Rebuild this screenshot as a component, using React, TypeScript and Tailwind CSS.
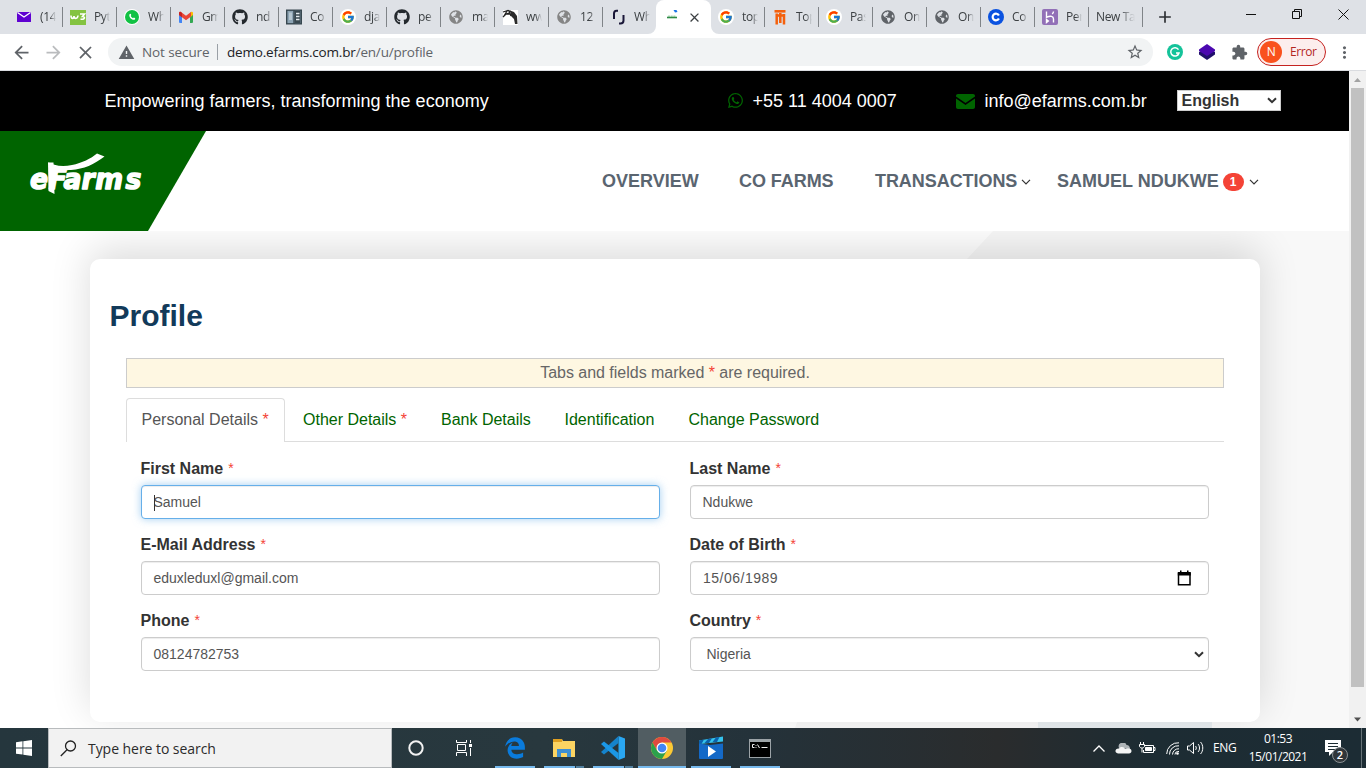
import React from "react";
import { FcGoogle } from "react-icons/fc";
import { FaGithub, FaWhatsapp, FaGlobeAmericas } from "react-icons/fa";
import { FaEdgeLegacy } from "react-icons/fa6";
import {
  MdArrowBack,
  MdArrowForward,
  MdClose,
  MdWarning,
  MdStarBorder,
  MdExtension,
  MdMoreVert,
  MdAdd,
} from "react-icons/md";

const Round = ({ children }: { children: React.ReactNode }) => (
  <span className="flex h-4 w-4 shrink-0 items-center justify-center rounded-full bg-white">{children}</span>
);
const Google = () => (
  <Round>
    <FcGoogle size={14} />
  </Round>
);
const Globe = ({ dark = false }: { dark?: boolean }) => (
  <FaGlobeAmericas size={14} className={dark ? "mx-px shrink-0 text-[#5f6368]" : "mx-px shrink-0 text-[#858585]"} />
);
const YahooMail = () => (
  <svg width="16" height="16" viewBox="0 0 16 16" className="shrink-0">
    <rect x="1" y="3" width="14" height="10" rx="0.5" fill="#5f01d1" />
    <path d="M1.500 3.500 8 8l6.500-4.500" stroke="#fff" strokeWidth="1.300" fill="none" />
  </svg>
);
const W3 = () => (
  <svg width="16" height="16" viewBox="0 0 16 16" className="shrink-0">
    <rect y="1" width="16" height="15" fill="#84c341" />
    <path d="M1 6.500c0 4 3 3.500 3 .5 0 3 3.500 3.500 4-.5M10 5h4.500l-2 2.500c3 0 2.500 3.500-2 2.500" stroke="#fff" strokeWidth="1.600" fill="none" />
  </svg>
);
const WhatsApp = () => (
  <Round>
    <span className="flex h-[14px] w-[14px] items-center justify-center rounded-full bg-[#12c144]">
      <svg width="10" height="10" viewBox="0 0 10 10">
        <path d="M2.500 2.300c.7-1 1.300-.5 1.800.8L3.700 4c.5 1 1.200 1.700 2.300 2.300l.9-.7c1.500.7 1.700 1 1 1.900C5.500 9 1.200 5 2.500 2.300z" fill="#fff" />
      </svg>
    </span>
  </Round>
);
const Gmail = () => (
  <svg width="16" height="16" viewBox="0 0 16 16" className="shrink-0">
    <path d="M1 4h3v10H2a1 1 0 0 1-1-1z" fill="#4285f4" />
    <path d="M12 4h3v9a1 1 0 0 1-1 1h-2z" fill="#34a853" />
    <path d="M12 4l1-1c1.500-.8 2 .3 2 1v2l-3 2.500z" fill="#fbbc04" />
    <path d="M1 6V4c0-1.500 1.500-1.500 2-1l5 3.800L13 3v4.500l-5 3.800L1 6z" fill="#ea4335" />
    <path d="M1 6l3 2.300V4L2.500 2.800C1.500 2.500 1 3.500 1 4z" fill="#c5221f" />
  </svg>
);
const Book = () => (
  <svg width="16" height="16" viewBox="0 0 16 16" className="shrink-0">
    <rect x="0.700" y="1.200" width="14.600" height="13.600" fill="#8da4b4" stroke="#37474f" strokeWidth="1.400" />
    <path d="M8.500 2h6v12h-6z" fill="#37474f" />
    <path d="M10 4.500h3.500M10 7.500h3.500M10 10.500h3.500" stroke="#e3eaee" strokeWidth="1.400" />
    <path d="M8 1v14" stroke="#37474f" strokeWidth="1.400" />
    <path d="M3 3.500h3v7.500H3z" fill="#b5c6d0" />
  </svg>
);
const Oxen = () => (
  <svg width="16" height="16" viewBox="0 0 16 16" className="shrink-0">
    <rect x="1" y="1" width="15" height="15" fill="#fff" />
    <path d="M1 3l5-1.500 3 1M1 8l3-3 3-1M5 2L2 7M7 2l2 5M3 5h5" fill="none" stroke="#222" strokeWidth="1.300" />
    <path d="M8 1.500l4 1.500 3 4 .5 8H13l-1-5-3-3z" fill="#2b2b2b" />
  </svg>
);
const Brackets = () => (
  <svg width="16" height="16" viewBox="0 0 16 16" className="shrink-0">
    <path d="M8 1.700H6.500C4.500 1.700 4 2.500 4 4.500V10M9 14.500h1.500c2 0 3-.8 3-3V6" stroke="#1a1738" strokeWidth="2" fill="none" />
  </svg>
);
const Orange = () => (
  <svg width="16" height="16" viewBox="0 0 16 16" className="shrink-0">
    <path d="M2.500 2.300h11" stroke="#f4600c" strokeWidth="2.600" />
    <path d="M4.700 4.500v11M12 5v10.500M4.500 6.500h8M8.300 4v10" stroke="#f4600c" strokeWidth="2.500" fill="none" />
  </svg>
);
const Coin = () => (
  <svg width="16" height="16" viewBox="0 0 16 16" className="shrink-0">
    <circle cx="8" cy="8" r="8" fill="#0a52e0" />
    <path d="M10.900 6.500a3.300 3.300 0 1 0 0 3" stroke="#fff" strokeWidth="2.200" fill="none" />
  </svg>
);
const Heroku = () => (
  <svg width="16" height="16" viewBox="0 0 16 16" className="shrink-0">
    <rect width="16" height="16" rx="2" fill="#9270b7" />
    <path d="M4.500 2.500v5.800c4-1.700 7-1.300 7 1.700v3.500M11.500 2.500c0 1-.5 1.800-1.300 2.500M4.500 10.500v3l1.800-1.500z" stroke="#fff" strokeWidth="1.400" fill="none" />
  </svg>
);
const Hub = () => <FaGithub size={16} className="shrink-0 text-[#24292e]" />;

const TabItem = ({ icon, text, line = true }: { icon?: React.ReactNode; text: string; line?: boolean }) => (
  <div className="relative flex h-[34px] w-[54px] shrink-0 items-center pl-2">
    {icon}
    <span
      className={
        (icon ? "ml-2 w-[16px]" : "w-[39px]") +
        " overflow-hidden whitespace-nowrap text-[12px] tracking-[-0.350px] text-[#3c4043] [mask-image:linear-gradient(to_right,black_60%,transparent)]"
      }
    >
      {text}
    </span>
    {line && <span className="absolute right-[-1px] top-[7px] h-5 w-px bg-[#808488]" />}
  </div>
);

const ActiveTab = () => (
  <div className="relative flex h-[34px] w-[55px] shrink-0 items-center rounded-t-lg bg-white pl-[11px]">
    <svg width="12" height="14" viewBox="0 0 12 14">
      <path d="M0 7.500h10" stroke="#2e8b45" strokeWidth="1.600" />
      <path d="M1 6.200h8" stroke="#7fbd8c" strokeWidth="1" strokeDasharray="2 .7" />
      <path d="M6.500 0l1.500 2.500 2.500-.5-1-2z" fill="#1a73e8" />
    </svg>
    <MdClose size={15} className="ml-[8px] text-[#3c4043]" />
    <svg className="absolute -left-2 bottom-0" width="8" height="8">
      <path d="M8 0v8H0a8 8 0 0 0 8-8" fill="#fff" />
    </svg>
    <svg className="absolute -right-2 bottom-0" width="8" height="8">
      <path d="M0 0v8h8a8 8 0 0 1-8-8" fill="#fff" />
    </svg>
  </div>
);

const BrowserBar = () => (
  <div className="font-['Open_Sans','Noto_Sans',sans-serif]">
    <div className="flex h-[34px] bg-[#dee1e6] pl-2">
      <TabItem icon={<YahooMail />} text="(14" />
      <TabItem icon={<W3 />} text="Pyt" />
      <TabItem icon={<WhatsApp />} text="Wh" />
      <TabItem icon={<Gmail />} text="Gm" />
      <TabItem icon={<Hub />} text="nd" />
      <TabItem icon={<Book />} text="Co" />
      <TabItem icon={<Google />} text="dja" />
      <TabItem icon={<Hub />} text="pe" />
      <TabItem icon={<Globe />} text="ma" />
      <TabItem icon={<Oxen />} text="ww" />
      <TabItem icon={<Globe />} text="12" />
      <TabItem icon={<Brackets />} text="Wh" line={false} />
      <ActiveTab />
      <div className="-ml-px flex">
        <TabItem icon={<Google />} text="top" />
        <TabItem icon={<Orange />} text="Top" />
        <TabItem icon={<Google />} text="Pas" />
        <TabItem icon={<Globe dark />} text="On" />
        <TabItem icon={<Globe dark />} text="On" />
        <TabItem icon={<Coin />} text="Co" />
        <TabItem icon={<Heroku />} text="Per" />
        <TabItem text="New Ta" />
      </div>
      <MdAdd size={20} className="ml-[13px] mt-[7px] text-[#2c2f33]" />
      <svg className="ml-auto mr-[17px] mt-2" width="104" height="14" viewBox="0 0 104 14" fill="none" stroke="#111">
        <path d="M1 6.500h10M93.500 1.500l10 10M103.500 1.500l-10 10" />
        <path d="M47.500 3.500h7v7h-7zM49.500 3.500v-2h7v7h-2" />
      </svg>
    </div>
    <div className="flex h-9 items-center bg-white">
      <MdArrowBack size={21} className="ml-[11px] text-[#5f6368]" />
      <MdArrowForward size={21} className="ml-[11px] text-[#babcbe]" />
      <MdClose size={21} className="ml-[11px] text-[#5f6368]" />
      <div className="ml-[12px] flex h-7 w-[1045px] items-center rounded-full bg-[#f1f3f4] pl-[10px] text-[13.500px] text-[#5f6368]">
        <MdWarning size={17} />
        <span className="ml-[7px] w-[67px] whitespace-nowrap tracking-[-0.100px]">Not secure</span>
        <span className="ml-2 h-4 w-px bg-[#9aa0a6]" />
        <span className="ml-[9px] whitespace-nowrap tracking-[-0.190px]">
          <span className="text-[#202124]">demo.efarms.com.br</span>/en/u/profile
        </span>
        <MdStarBorder size={18} className="ml-auto mr-[9px]" />
      </div>
      <svg width="16" height="16" viewBox="0 0 16 16" className="ml-[14px]">
        <circle cx="8" cy="8" r="8" fill="#15c39a" />
        <path d="M11.500 5.600A4.200 4.200 0 1 0 12 9H9M12 9l-1.500 2.500" stroke="#fff" strokeWidth="1.500" fill="none" />
      </svg>
      <svg width="16" height="16" viewBox="0 0 16 16" className="ml-4">
        <path d="M0 8l8-4 8 4v2.500L8 16l-8-5.500z" fill="#20106b" />
        <path d="M0 5.500L8 0l8 5.500v1.500L8 12 0 7z" fill="#4b08b0" />
      </svg>
      <MdExtension size={17} className="ml-4 text-[#5f6368]" />
      <div className="ml-[9px] flex h-7 w-[69px] items-center rounded-full border border-[#c5221f] bg-[#fceeed] pl-[2px] text-[12px] tracking-[-0.400px] text-[#b3261e]">
        <span className="flex h-[22px] w-[22px] items-center justify-center rounded-full bg-[#f9511d] text-[12px] text-white">N</span>
        <span className="ml-[8px]">Error</span>
      </div>
      <MdMoreVert size={19} className="ml-[9px] text-[#5f6368]" />
    </div>
    <div className="h-px bg-[#dadce0]" />
  </div>
);

const Chevron = () => (
  <svg width="10" height="6" viewBox="0 0 10 6" fill="none" className="mt-px">
    <path d="M1 .8l4 4 4-4" stroke="#333" strokeWidth="1.200" />
  </svg>
);
const SelectArrow = () => (
  <svg width="10" height="7" viewBox="0 0 10 7" fill="none">
    <path d="M1 1.200l4 4 4-4" stroke="#333" strokeWidth="2" />
  </svg>
);

const TopBar = () => (
  <div className="flex h-[60px] items-center bg-black pl-[104.500px] text-[18px] text-white">
    <span className="w-[622px] whitespace-nowrap">Empowering farmers, transforming the economy</span>
    <FaWhatsapp size={17} className="-mt-px text-[#006400]" />
    <span className="ml-[9px] w-[203px]">+55 11 4004 0007</span>
    <svg width="19" height="15" viewBox="0 0 19 15" className="text-[#006400]" fill="currentColor">
      <path d="M0 2C0 .8.800 0 2 0h15c1.200 0 2 .8 2 2v.5L9.500 9 0 2.500zM0 4.600l9.500 6.300L19 4.600V13c0 1.200-.8 2-2 2H2c-1.200 0-2-.8-2-2z" />
    </svg>
    <span className="ml-[10px] w-[192px]">info@efarms.com.br</span>
    <div className="-mt-px flex h-[21px] w-[104px] items-center justify-between border border-[#ccc] bg-white pl-[4px] pr-[3px] text-[16px] font-bold text-[#333]">
      English
      <SelectArrow />
    </div>
  </div>
);

const Logo = () => (
  <svg width="120" height="50" viewBox="26 148 120 50" fill="#fff">
    <text
      transform="scale(0.920 1)"
      x="32.500 53 69 88.500 103.500 136.500"
      y="189.500"
      fontFamily="DejaVu Sans"
      fontWeight="bold"
      fontStyle="italic"
      fontSize="29"
      stroke="#fff"
      strokeWidth="1.500"
      strokeLinejoin="round"
    >
      eFarms
    </text>
    <path d="M48 162c5 3.500 14 5 24 3 10-2 19-6.500 25-11.500l7.500 3C94 164.500 84 169 71 170c-8 .5-14-.5-18-2z" />
    <path d="M48 162.500h5.500l1 31.500-6-3z" />
  </svg>
);

const NavBar = () => (
  <div className="relative z-10 flex h-[100px] bg-white text-[18px] font-bold text-[#5a6570]">
    <div className="w-[206px] shrink-0 bg-[#006400] pl-[26px] pt-[17px] [clip-path:polygon(0_0,206px_0,148px_100px,0_100px)]">
      <Logo />
    </div>
    <div className="ml-[396px] flex h-[100px] items-center whitespace-nowrap">
      <span className="w-[137px]">OVERVIEW</span>
      <span className="w-[136px] tracking-[-0.060px]">CO FARMS</span>
      <span className="flex w-[182px] items-center gap-[4px] tracking-[-0.060px]">TRANSACTIONS <Chevron /></span>
      <span className="flex items-center">
        SAMUEL NDUKWE
        <span className="ml-[4px] mr-[5px] mt-px flex h-[18px] w-[21px] items-center justify-center rounded-full bg-[#f44336] text-[12px] text-white">1</span>
        <Chevron />
      </span>
    </div>
  </div>
);

const Star = () => <span className="text-[#f44336]">*</span>;

const Field = ({ label, value, focus = false, right }: { label: string; value: string; focus?: boolean; right?: React.ReactNode }) => (
  <div className="h-[76px]">
    <div className="-ml-[0.500px] flex h-[27px] items-start pt-px text-[16px] font-bold leading-[20px] text-[#333]">
      {label}
      <span className="ml-[5px] text-[14px] font-normal leading-[18px] text-[#f44336]">*</span>
    </div>
    <div
      className={
        "relative flex h-[34px] items-center justify-between rounded border bg-white pl-[11.500px] text-[14px] text-[#555] " +
        (focus
          ? "border-[#66afe9] shadow-[inset_0_1px_1px_rgba(0,0,0,.075),0_0_8px_rgba(102,175,233,.6)]"
          : "border-[#ccc] shadow-[inset_0_1px_1px_rgba(0,0,0,.075)]")
      }
    >
      <span className={label === "Country" ? "pl-1" : label === "Date of Birth" ? "pl-[0.500px] tracking-[0.500px]" : ""}>{value}</span>
      {focus && <span className="absolute left-[12px] top-[9px] h-4 w-px bg-[#333]" />}
      {right}
    </div>
  </div>
);

const Calendar = () => (
  <svg className="mr-4" width="16" height="16" viewBox="0 0 16 16">
    <path d="M2.500 3.500h11.500v11.200H2.500z" fill="none" stroke="#000" strokeWidth="1.500" />
    <path d="M1.800 2h13v3.500h-13zM4 .5h1.500v2H4zM11 .5h1.500v2H11z" />
  </svg>
);

const Card = () => (
  <div className="relative mx-[90px] mt-7 h-[463px] w-[1170px] rounded-[10px] bg-white shadow-[0_-10px_40px_rgba(0,0,0,0.140)]">
    <h1 className="pl-[19.500px] pt-10 text-[30px] font-bold leading-[34px] text-[#123a5a]">Profile</h1>
    <div className="mx-9 mt-[25px]">
      <div className="flex h-[30px] items-center justify-center border border-[#ccc] bg-[#fef7e2] text-[16px] text-[#666]">
        <span className="tracking-[-0.020px]">Tabs and fields marked <Star /> are required.</span>
      </div>
      <div className="mt-[10px] flex h-[44px] border-b border-[#ddd] text-[16px] text-[#006400]">
        <div className="h-[44px] w-[159px] shrink-0 whitespace-nowrap rounded-t border border-b-0 border-[#ddd] bg-white pl-[14.500px] leading-[41px] text-[#555]">
          Personal Details <Star />
        </div>
        <span className="ml-[18px] w-[138px] leading-[43px]">Other Details <Star /></span>
        <span className="w-[123.500px] leading-[43px]">Bank Details</span>
        <span className="w-[124px] leading-[43px]">Identification</span>
        <span className="leading-[43px]">Change Password</span>
      </div>
      <div className="grid grid-cols-2 gap-x-[30px] px-[15px] pt-4">
        <Field label="First Name" value="Samuel" focus />
        <Field label="Last Name" value="Ndukwe" />
        <Field label="E-Mail Address" value="eduxleduxl@gmail.com" />
        <Field label="Date of Birth" value="15/06/1989" right={<Calendar />} />
        <Field label="Phone" value="08124782753" />
        <Field label="Country" value="Nigeria" right={<span className="mr-[4px]"><SelectArrow /></span>} />
      </div>
    </div>
  </div>
);

const ScrollBar = () => (
  <div className="flex w-[17px] flex-col items-center bg-[#f1f1f1]">
    <svg width="17" height="17"><path d="M5 11l3.500-4 3.500 4z" fill="#a3a3a3" /></svg>
    <div className="h-[599px] w-[13px] bg-[#c1c1c1]" />
    <svg className="mt-auto" width="17" height="17"><path d="M5 6.500l3.500 4 3.500-4z" fill="#505050" /></svg>
  </div>
);

const TaskIcon = ({ children, active = false, split = false }: { children: React.ReactNode; active?: boolean; split?: boolean }) => (
  <div className={"flex h-10 w-12 flex-col items-center " + (active ? "bg-[#515d62]" : "")}>
    <div className="flex h-[38px] items-center pt-[2px]">{children}</div>
    <div className={active ? "h-[2px] w-12 bg-[#76b9ed]" : "flex h-[2px] w-10 bg-[#76b9ed]"}>
      {split && <span className="ml-auto h-[2px] w-[9px] border-l border-[#26363d] bg-[#52809f]" />}
    </div>
  </div>
);

const TaskBar = () => (
  <div className="flex h-10 items-center bg-[linear-gradient(to_right,#25363d_0%,#28383e_40%,#24323a_55%,#2a2c2d_73%,#1d2c33_84%,#1c2c34_100%)] font-['Open_Sans','Noto_Sans',sans-serif] text-white">
    <div className="flex w-12 justify-center">
      <svg width="16" height="16" viewBox="0 0 16 16" fill="#fff">
        <path d="M0 2.200L6.500 1.300v6.200H0zM7.300 1.200L16 0v7.500H7.300zM0 8.400h6.500v6.200L0 13.700zM7.300 8.400H16V16l-8.700-1.300z" />
      </svg>
    </div>
    <div className="flex h-10 w-[344px] items-center border border-[#b8bbbd] bg-[#f2f2f2] pl-[11px] text-[#2b2b2b]">
      <svg width="17" height="17" viewBox="0 0 17 17" fill="none" stroke="#222" strokeWidth="1.300">
        <circle cx="10.500" cy="6" r="5" />
        <path d="M7 9.700L.8 16" />
      </svg>
      <span className="ml-[11px] whitespace-nowrap text-[14px] tracking-[-0.050px]">Type here to search</span>
    </div>
    <div className="flex w-12 justify-center">
      <svg width="16" height="16"><circle cx="8" cy="8" r="6.700" fill="none" stroke="#f2f2f2" strokeWidth="2" /></svg>
    </div>
    <div className="flex w-[51px] justify-center pr-[3px]">
      <svg width="16" height="16" viewBox="0 0 16 16" fill="none" stroke="#fff">
        <path d="M.5 0v2.500h10V0M1.500 4.500h8v6h-8zM.5 16v-3.500h10V16M14.500 0v3M14.500 8v8" />
        <path d="M13 4h3v3h-3z" fill="#fff" stroke="none" />
      </svg>
    </div>
    <div className="flex gap-px">
      <TaskIcon><FaEdgeLegacy size={22} className="text-[#0a7bdc]" /></TaskIcon>
      <TaskIcon split>
        <svg width="22" height="20" viewBox="0 0 22 20">
          <path d="M0 1h9l1 2h12v16H0z" fill="#fcd462" />
          <path d="M0 1h9v3H0z" fill="#e0a021" />
          <path d="M4 19v-8h14v8h-4v-4H8v4z" fill="#3f8fd2" />
        </svg>
      </TaskIcon>
      <TaskIcon split>
        <svg width="24" height="24" viewBox="0 0 24 24">
          <path d="M17.500 0L24 2.500v19L17.500 24z" fill="#2aa7f2" />
          <path d="M17.500 0v7L3 18.500 0 16z" fill="#1583cc" />
          <path d="M17.500 24v-7L3 5.500 0 8z" fill="#1b97e6" />
        </svg>
      </TaskIcon>
      <TaskIcon active>
        <svg width="22" height="22" viewBox="0 0 22 22">
          <circle cx="11" cy="11" r="11" fill="#fbc934" />
          <path d="M1.500 5.500A11 11 0 0 1 20.500 5.500H11L6.200 13.700z" fill="#e04a3f" />
          <path d="M1.500 5.500A11 11 0 0 0 11 22l4.800-8.200H6.200z" fill="#2ca14c" />
          <circle cx="11" cy="11" r="5.500" fill="#fff" />
          <circle cx="11" cy="11" r="4.300" fill="#4285f4" />
        </svg>
      </TaskIcon>
      <TaskIcon>
        <svg width="24" height="24" viewBox="0 0 24 24">
          <path d="M0 4.500L24 .5v5L1 8z" fill="#35c3ed" />
          <path d="M0 4.500l5-.9L2.500 8H0zM9 3l4-.7L10 7H5.500zM17 1.600l3.500-.6L18 6h-4.500z" fill="#0b62ad" />
          <path d="M0 7.500L11 9l13-1.500V22a1 1 0 0 1-1 1H1a1 1 0 0 1-1-1z" fill="#1469c7" />
          <path d="M9 10v11l8-5.500z" fill="#fff" />
        </svg>
      </TaskIcon>
      <TaskIcon>
        <svg width="22" height="19" viewBox="0 0 22 19">
          <rect width="22" height="19" fill="#9ca3a7" />
          <rect x="1" y="3" width="20" height="15" fill="#000" />
          <path d="M5.500 5.500H3.500v3h2M7 6v.8M7 8v.8M8.500 5.500l2 3.500M12.500 8.500h6" stroke="#eee" fill="none" />
        </svg>
      </TaskIcon>
    </div>
    <div className="ml-auto flex items-center">
      <svg width="12" height="7" viewBox="0 0 12 7" fill="none" stroke="#fff" strokeWidth="1.300"><path d="M.5 6.500L6 1l5.500 5.500" /></svg>
      <svg className="ml-[10px]" width="17" height="11" viewBox="0 0 17 11">
        <path d="M4 5a4 4 0 0 1 7.500-3C14 2 15 4 15 6z" fill="#aeb4b7" />
        <path d="M3 10.500C-1 10 0 5 4 5.500 6 3 9.500 4 10 6c3-1.500 6.500-.5 6.500 2 0 1.500-1 2.500-2.500 2.500z" fill="#f4f4f4" />
      </svg>
      <svg className="ml-[7px]" width="17" height="13" viewBox="0 0 17 13" fill="none" stroke="#fff">
        <path d="M5 3.500h9.500v7H4.500V8M14.500 5.500h1.500v3h-1.500M1.500 0v2.500M4.500 0v2.500M.5 2.500h5v2c-1 2-4 2-5 0zM3 6v4.500" />
        <path d="M6.500 5.500h6v3h-6z" fill="#fff" />
      </svg>
      <svg className="ml-[10px]" width="14" height="13" viewBox="0 0 14 13" fill="none" stroke="#fff">
        <path d="M.7 12A11.300 11.300 0 0 1 13 .8M3.500 12.500A8.500 8.500 0 0 1 13 3.800M6.500 12.500A6 6 0 0 1 13 6.800M9 12.500a3.500 3.500 0 0 1 4-3" />
        <circle cx="11.500" cy="11.500" r="1.300" fill="#fff" stroke="none" />
      </svg>
      <svg className="ml-[7px]" width="17" height="14" viewBox="0 0 17 14" fill="none" stroke="#fff">
        <path d="M.5 5v4h2l4 3.500v-11L2.500 5zM8.500 5c1 1 1 3 0 4M11 3c2 2 2 6 0 8M13.500 1c3 3 3 9 0 12" />
      </svg>
      <span className="ml-[9px] w-[25px] text-[12px] tracking-[-0.400px]">ENG</span>
      <div className="ml-[8px] flex w-[64px] flex-col items-center whitespace-nowrap text-[12px] leading-[18px] tracking-[-0.500px]">
        <span>01:53</span>
        <span>15/01/2021</span>
      </div>
      <div className="relative ml-[15px] mr-[4px] h-6 w-[32px] pt-1">
        <svg width="17" height="18" viewBox="0 0 17 18">
          <path d="M0 0h16v12H8l-4 4v-4H0z" fill="#fff" />
          <path d="M3 3.500h10M3 6.500h10M3 9.500h7" stroke="#1d2c33" />
        </svg>
        <span className="absolute left-[7px] top-[11px] flex h-4 w-4 items-center justify-center rounded-full border border-[#8b9194] bg-[#30363a] text-[11px] font-semibold">2</span>
      </div>
      <div className="mr-1 h-10 w-px bg-[#667277]" />
    </div>
  </div>
);

export default function App() {
  return (
    <div className="flex h-[768px] w-[1366px] flex-col overflow-hidden bg-white">
      <BrowserBar />
      <div className="flex h-[657px] font-['Liberation_Sans',Arial,sans-serif]">
        <div className="flex h-[657px] w-[1349px] flex-col overflow-hidden">
          <TopBar />
          <NavBar />
          <div className="relative h-[497px]">
            <div className="absolute inset-0 bg-[#f8f8f8] [clip-path:polygon(993px_0,1349px_0,1349px_497px,795px_497px,967px_28px)]" />
            <div className="absolute bottom-0 left-[1038px] h-10 w-[174px] bg-[#e8edf0]" />
            <div className="flow-root">
              <Card />
            </div>
          </div>
        </div>
        <ScrollBar />
      </div>
      <TaskBar />
    </div>
  );
}
